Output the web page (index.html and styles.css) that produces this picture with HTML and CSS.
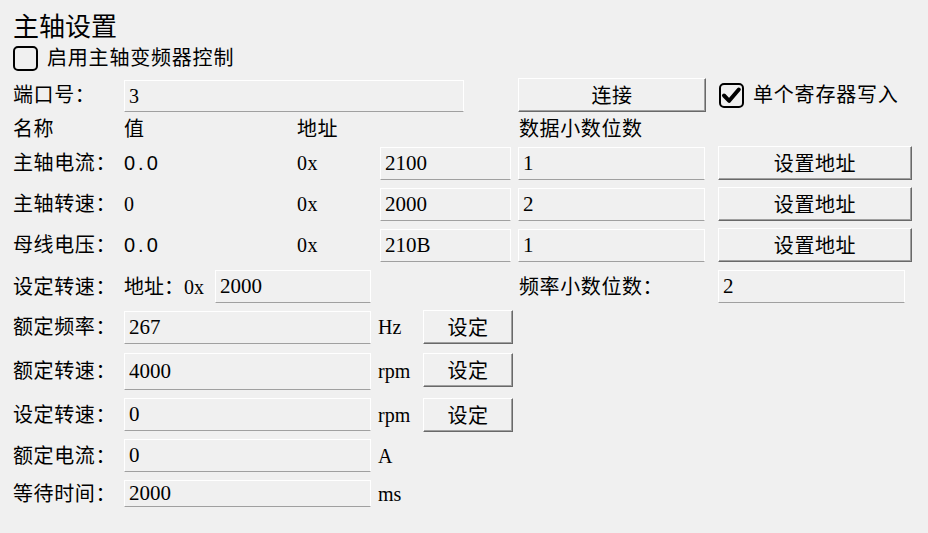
FILE: index.html
```html
<!DOCTYPE html>
<html lang="zh-CN">
<head>
  <meta charset="UTF-8">
  <title>主轴设置</title>
  <link rel="stylesheet" href="styles.css">
</head>
<body>
  <div class="panel">
    <div class="title">主轴设置</div>

    <div class="row row-check">
      <span class="box"></span>
      <span class="check-text">启用主轴变频器控制</span>
    </div>

    <div class="row row-port">
      <span class="lbl">端口号：</span>
      <input class="field sans w-port" value="3">
      <button class="btn w-connect">连接</button>
      <span class="box checked">
        <svg viewBox="0 0 25 25" width="25" height="25"><path d="M5 12.5 L10.2 17.8 L19.8 6.5" fill="none" stroke="#000" stroke-width="4" stroke-linecap="round" stroke-linejoin="round"/></svg>
      </span>
      <span class="check-text">单个寄存器写入</span>
    </div>

    <div class="row row-head">
      <span class="lbl">名称</span>
      <span class="c-val">值</span>
      <span class="c-addr">地址</span>
      <span>数据小数位数</span>
    </div>

    <div class="row row-first">
      <span class="lbl">主轴电流：</span>
      <span class="c-val sans spaced">0.0</span>
      <span class="c-hex">0x</span>
      <input class="field w-addr" value="2100">
      <input class="field w-dec" value="1">
      <button class="btn w-setaddr">设置地址</button>
    </div>

    <div class="row">
      <span class="lbl">主轴转速：</span>
      <span class="c-val">0</span>
      <span class="c-hex">0x</span>
      <input class="field w-addr" value="2000">
      <input class="field w-dec" value="2">
      <button class="btn w-setaddr">设置地址</button>
    </div>

    <div class="row">
      <span class="lbl">母线电压：</span>
      <span class="c-val sans spaced">0.0</span>
      <span class="c-hex">0x</span>
      <input class="field w-addr" value="210B">
      <input class="field w-dec" value="1">
      <button class="btn w-setaddr">设置地址</button>
    </div>

    <div class="row row-freq">
      <span class="lbl">设定转速：</span>
      <span class="c-prefix">地址：0x</span>
      <input class="field w-speedaddr" value="2000">
      <span class="c-freq">频率小数位数：</span>
      <input class="field w-freqdec" value="2">
    </div>

    <div class="row row-tight">
      <span class="lbl">额定频率：</span>
      <input class="field w-value" value="267">
      <span class="unit">Hz</span>
      <button class="btn w-set">设定</button>
    </div>

    <div class="row row-tall">
      <span class="lbl">额定转速：</span>
      <input class="field w-value" value="4000">
      <span class="unit">rpm</span>
      <button class="btn w-set btn-short">设定</button>
    </div>

    <div class="row row-mid">
      <span class="lbl">设定转速：</span>
      <input class="field w-value" value="0">
      <span class="unit">rpm</span>
      <button class="btn w-set">设定</button>
    </div>

    <div class="row row-low">
      <span class="lbl">额定电流：</span>
      <input class="field w-value" value="0">
      <span class="unit">A</span>
    </div>

    <div class="row row-last">
      <span class="lbl">等待时间：</span>
      <input class="field w-value" value="2000">
      <span class="unit">ms</span>
    </div>
  </div>
</body>
</html>
```

FILE: styles.css
```css
html, body {
  margin: 0;
  background: #f0f0f0;
}
body {
  font-family: "Liberation Serif", "Noto Sans CJK SC", serif;
  font-size: 20px;
  line-height: 1;
  color: #000;
}
.panel {
  display: flex;
  flex-direction: column;
  padding: 8px 0 0 13px;
}
.title {
  height: 34px;
  line-height: 34px;
  font-size: 26px;
  font-family: "Noto Sans CJK SC", sans-serif;
}
.row {
  display: flex;
  align-items: center;
  height: 34px;
  margin-top: 7px;
  letter-spacing: 0.6px;
  white-space: nowrap;
}
.row-check {
  height: 28px;
  margin-top: 2px;
}
.row-port {
  margin-top: 6px;
}
.row-head {
  margin-top: 0;
}
.row-first {
  margin-top: 0;
}
.row-freq {
  height: 35px;
}
.row-tight {
  margin-top: 6px;
}
.row-tall {
  height: 38px;
  margin-top: 8px;
}
.row-mid {
  height: 35px;
}
.row-low {
  height: 33px;
}
.row-last {
  height: 27px;
  margin-top: 8px;
}

.lbl {
  width: 111px;
  flex: none;
}
.sans {
  font-family: "Liberation Sans", "Noto Sans CJK SC", sans-serif;
}
.spaced {
  letter-spacing: 3px;
}
.c-val {
  width: 173px;
  flex: none;
}
.c-addr {
  width: 222px;
  flex: none;
}
.c-hex {
  width: 83px;
  flex: none;
}
.c-prefix {
  width: 91px;
  flex: none;
  letter-spacing: 0;
}
.c-freq {
  width: 199px;
  flex: none;
  margin-left: 148px;
}
.unit {
  width: 45px;
  flex: none;
  margin-left: 7px;
  letter-spacing: 0;
}

/* sunken edit boxes */
.field {
  box-sizing: border-box;
  height: 100%;
  margin: 0;
  padding: 0 4px;
  flex: none;
  background: #f0f0f0;
  border: 1px solid #fff;
  border-bottom-color: #a0a0a0;
  font: inherit;
  font-size: 21px;
  color: #000;
  outline: none;
}
.row .field {
  height: 33px;
}
.row-port .field {
  height: 32px;
  margin-top: 2px;
  font-size: 20px;
}
.row-tall .field {
  height: 37px;
  margin-top: 1px;
}
.row-last .field {
  height: 27px;
}
.w-port { width: 340px; }
.w-addr { width: 131px; }
.w-dec { width: 187px; margin-left: 7px; }
.w-speedaddr { width: 156px; }
.w-freqdec { width: 187px; }
.w-value { width: 247px; }

/* raised push buttons */
.btn {
  box-sizing: border-box;
  height: 34px;
  margin: 0;
  padding: 0;
  flex: none;
  background: #f0f0f0;
  border: 1px solid;
  border-color: #fff #696969 #696969 #fff;
  box-shadow: inset -1px -1px 0 #a0a0a0;
  font: inherit;
  font-family: "Noto Sans CJK SC", sans-serif;
  letter-spacing: 0.6px;
  color: #000;
}
.w-connect { width: 188px; margin-left: 54px; }
.w-setaddr { width: 194px; margin-left: 13px; }
.w-set { width: 90px; }
.btn-short {
  height: 34px;
  align-self: flex-start;
  margin-top: 1px;
}

/* check boxes */
.box {
  box-sizing: border-box;
  width: 25px;
  height: 25px;
  flex: none;
  border: 2px solid #000;
  border-radius: 5px;
  margin-right: 9px;
  position: relative;
}
.box svg {
  position: absolute;
  left: -2px;
  top: -2px;
}
.checked {
  margin-left: 13px;
}
.check-text {
  letter-spacing: 0.8px;
}
```
